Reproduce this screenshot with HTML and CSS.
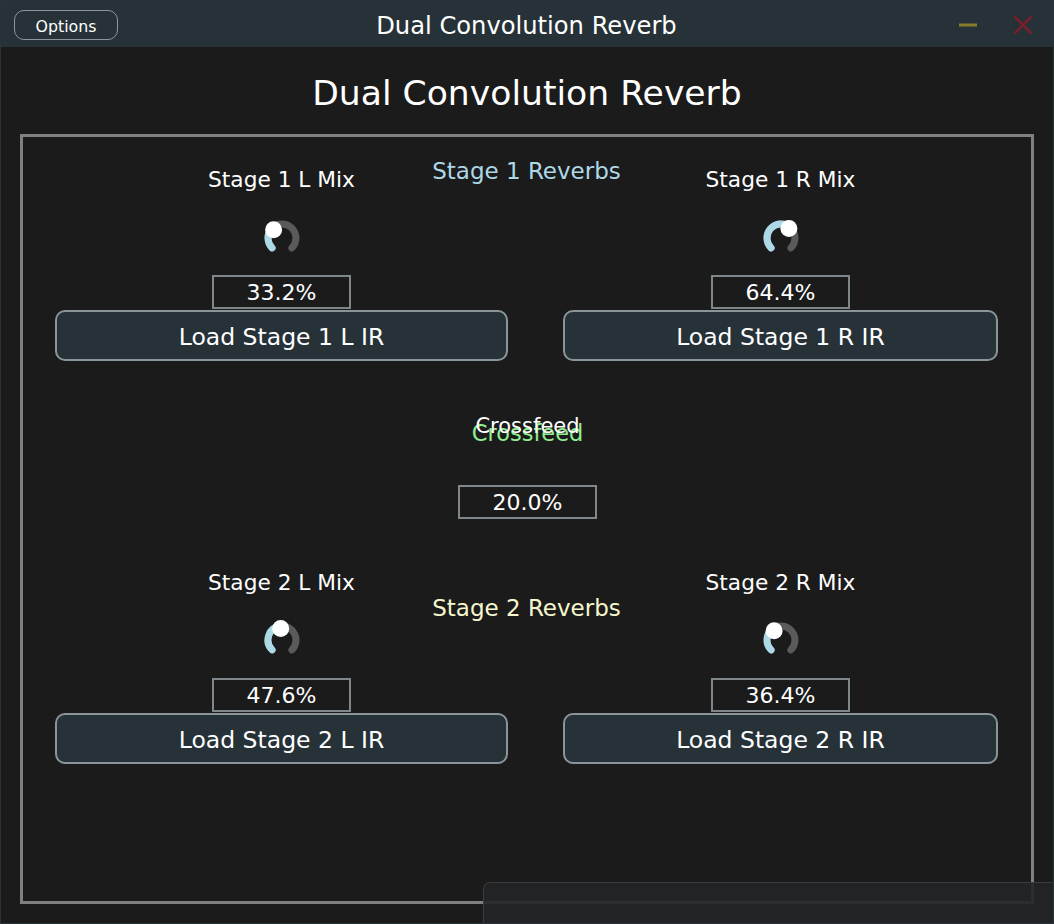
FILE: index.html
```html
<!DOCTYPE html>
<html>
<head>
<meta charset="utf-8">
<title>Dual Convolution Reverb</title>
<link rel="stylesheet" href="styles.css">
</head>
<body>
<div class="window">
  <header class="titlebar">
    <div class="tb-left"><button class="options">Options</button></div>
    <div class="tb-title">Dual Convolution Reverb</div>
    <div class="tb-right">
      <svg class="tb-icon" width="20" height="20" viewBox="0 0 20 20"><line x1="1" y1="10" x2="19" y2="10" stroke="#8a7a2c" stroke-width="3"/></svg>
      <svg class="tb-icon" width="20" height="20" viewBox="0 0 20 20"><path d="M1.5 1.5 L18.5 18.5 M18.5 1.5 L1.5 18.5" stroke="#7a1f2b" stroke-width="2.6" fill="none"/></svg>
    </div>
  </header>
  <main class="content">
    <h1 class="heading">Dual Convolution Reverb</h1>
    <section class="frame">
      <div class="stage stage1">
        <div class="stage-title blue">Stage 1 Reverbs</div>
        <div class="col col-left">
          <div class="label">Stage 1 L Mix</div>
          <svg class="knob" width="40" height="40" viewBox="0 0 40 40">
            <path d="M10.1 29.9 A14 14 0 1 1 29.9 29.9" class="track"/>
            <path d="M10.1 29.9 A14 14 0 0 1 10.03 10.17" class="value"/>
            <circle cx="11.6" cy="11.7" r="8.5" class="thumb"/>
          </svg>
          <div class="valbox">33.2%</div>
          <button class="load">Load Stage 1 L IR</button>
        </div>
        <div class="col col-right">
          <div class="label">Stage 1 R Mix</div>
          <svg class="knob" width="40" height="40" viewBox="0 0 40 40">
            <path d="M10.1 29.9 A14 14 0 1 1 29.9 29.9" class="track"/>
            <path d="M10.1 29.9 A14 14 0 0 1 28.79 9.1" class="value"/>
            <circle cx="27.9" cy="10.6" r="8.5" class="thumb"/>
          </svg>
          <div class="valbox">64.4%</div>
          <button class="load">Load Stage 1 R IR</button>
        </div>
      </div>

      <div class="crossfeed">
        <div class="xf-labels">
          <div class="xf-white">Crossfeed</div>
          <div class="xf-green">Crossfeed</div>
        </div>
        <div class="valbox">20.0%</div>
      </div>

      <div class="stage stage2">
        <div class="stage-title yellow">Stage 2 Reverbs</div>
        <div class="col col-left">
          <div class="label">Stage 2 L Mix</div>
          <svg class="knob" width="40" height="40" viewBox="0 0 40 40">
            <path d="M10.1 29.9 A14 14 0 1 1 29.9 29.9" class="track"/>
            <path d="M10.1 29.9 A14 14 0 0 1 18.42 6.09" class="value"/>
            <circle cx="18.7" cy="8.6" r="8.5" class="thumb"/>
          </svg>
          <div class="valbox">47.6%</div>
          <button class="load">Load Stage 2 L IR</button>
        </div>
        <div class="col col-right">
          <div class="label">Stage 2 R Mix</div>
          <svg class="knob" width="40" height="40" viewBox="0 0 40 40">
            <path d="M10.1 29.9 A14 14 0 1 1 29.9 29.9" class="track"/>
            <path d="M10.1 29.9 A14 14 0 0 1 11.63 8.78" class="value"/>
            <circle cx="13.1" cy="10.8" r="8.5" class="thumb"/>
          </svg>
          <div class="valbox">36.4%</div>
          <button class="load">Load Stage 2 R IR</button>
        </div>
      </div>
    </section>
  </main>
  <div class="corner-panel"></div>
</div>
</body>
</html>
```

FILE: styles.css
```css
* { box-sizing: border-box; }

html, body {
  margin: 0;
  padding: 0;
  background: #1b1b1b;
}

body {
  font-family: "DejaVu Sans", Verdana, sans-serif;
  color: #ffffff;
}

.window {
  position: relative;
  width: 1054px;
  height: 924px;
  border: 1px solid #28333a;
  background: #1b1b1b;
  overflow: hidden;
}

.titlebar {
  height: 46px;
  background: #263238;
  display: grid;
  grid-template-columns: 1fr auto 1fr;
  align-items: center;
}

.tb-left {
  padding-left: 13px;
}

.options {
  width: 104px;
  height: 30px;
  margin-top: 1px;
  background: #263238;
  border: 1.5px solid #8c979b;
  border-radius: 10px;
  color: #ffffff;
  font-family: "DejaVu Sans", Verdana, sans-serif;
  font-size: 15.8px;
  padding: 3px 0 0;
}

.tb-title {
  font-size: 24.2px;
  line-height: 28px;
  margin-top: 4px;
  margin-left: -1px;
}

.tb-right {
  justify-self: end;
  display: flex;
  align-items: center;
  gap: 35px;
  padding-right: 20px;
  margin-top: 2px;
}

.tb-icon {
  display: block;
}

.content {
  display: flex;
  flex-direction: column;
}

.heading {
  margin: 26px 0 21px;
  text-align: center;
  font-size: 34.6px;
  line-height: 40px;
  font-weight: normal;
}

.frame {
  margin-left: 19px;
  width: 1014px;
  height: 770px;
  border: 3px solid #808080;
  padding-top: 20px;
  display: flex;
  flex-direction: column;
}

.stage {
  display: grid;
  grid-template-columns: 453px 435px;
  column-gap: 55px;
  padding: 0 33px 0 32px;
}

.stage-title,
.stage .col {
  grid-row: 1;
}

.stage-title {
  grid-column: 1 / -1;
  justify-self: center;
  align-self: start;
  font-size: 23px;
  line-height: 28px;
}

.blue { color: #add8e6; }
.yellow { color: #f7f7cf; }

.col-left { grid-column: 1; }
.col-right { grid-column: 2; }

.col {
  display: flex;
  flex-direction: column;
  align-items: center;
}

.label {
  font-size: 21.7px;
  line-height: 26px;
  padding-top: 1px;
  height: 26px;
}

.stage1 .label { margin-top: 9px; }
.stage1 .knob { margin-top: 26px; }
.stage1 .valbox { margin-top: 17px; }

.stage2 { margin-top: 50px; }
.stage2 .stage-title { margin-top: 25px; }
.stage2 .knob { margin-top: 25px; }
.stage2 .valbox { margin-top: 18px; }

.knob { display: block; }
.knob .track {
  fill: none;
  stroke: #5a5a5a;
  stroke-width: 7;
  stroke-linecap: round;
}
.knob .value {
  fill: none;
  stroke: #add8e6;
  stroke-width: 7;
  stroke-linecap: round;
}
.knob .thumb { fill: #ffffff; }

.valbox {
  width: 139px;
  height: 34px;
  border: 2px solid #7f878a;
  font-size: 22px;
  line-height: 30px;
  padding-top: 1px;
  text-align: center;
}

.load {
  margin-top: 1px;
  width: 100%;
  height: 51px;
  background: #263238;
  border: 2px solid #8a9599;
  border-radius: 10px;
  color: #ffffff;
  font-family: "DejaVu Sans", Verdana, sans-serif;
  font-size: 23.5px;
  padding: 2px 0 0;
}

.crossfeed {
  margin-top: 50px;
  display: flex;
  flex-direction: column;
  align-items: center;
  margin-left: 1px;
}

.xf-labels {
  display: grid;
  justify-items: center;
}

.xf-white,
.xf-green {
  grid-area: 1 / 1;
}

.xf-white {
  margin-top: 2px;
  font-size: 21px;
  line-height: 26px;
  z-index: 1;
}

.xf-green {
  margin-top: 8px;
  font-size: 22.5px;
  line-height: 28px;
  color: #90ee90;
}

.crossfeed .valbox {
  margin-top: 38px;
}

.corner-panel {
  position: absolute;
  left: 482px;
  top: 881px;
  right: -1px;
  bottom: -1px;
  background: rgba(34, 36, 38, 0.91);
  border-top: 1px solid #3a3c3f;
  border-left: 1px solid #3a3c3f;
  border-top-left-radius: 7px;
}
```
